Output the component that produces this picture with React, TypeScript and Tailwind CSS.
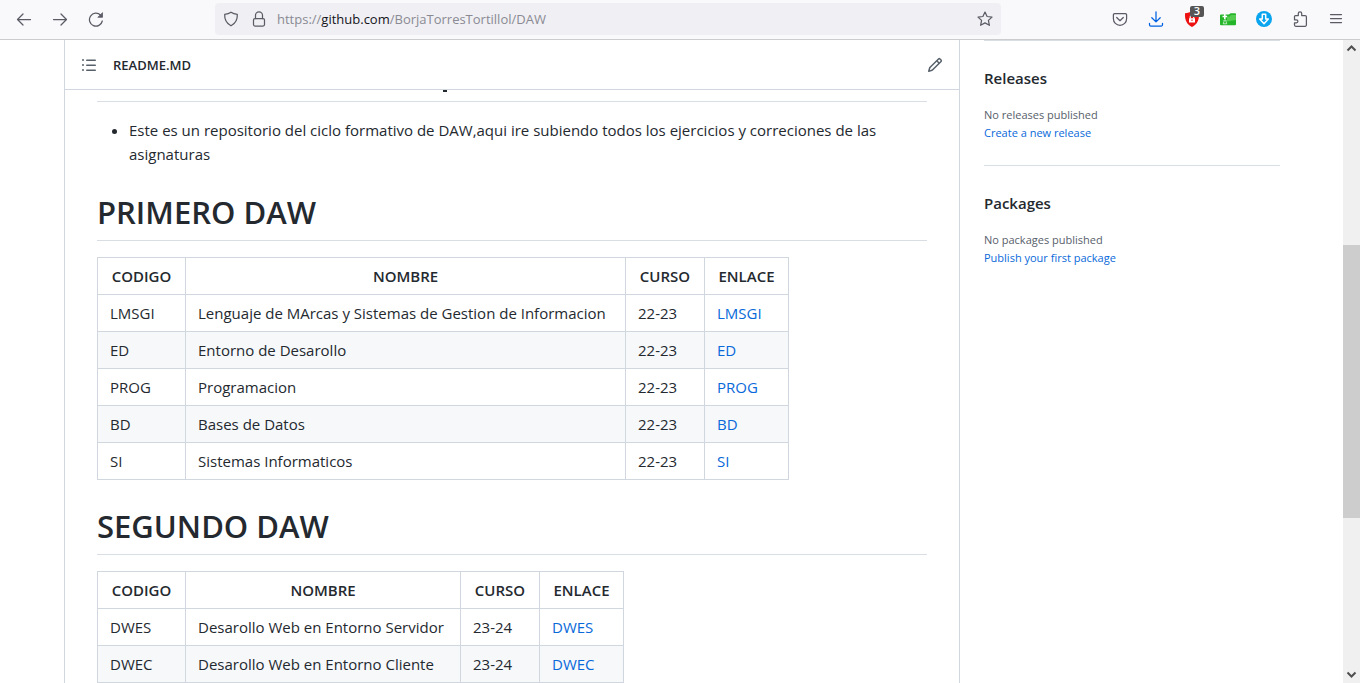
import type { ReactNode } from "react";

type Course = { code: string; name: string; year: string };

const firstYear: Course[] = [
  { code: "LMSGI", name: "Lenguaje de MArcas y Sistemas de Gestion de Informacion", year: "22-23" },
  { code: "ED", name: "Entorno de Desarollo", year: "22-23" },
  { code: "PROG", name: "Programacion", year: "22-23" },
  { code: "BD", name: "Bases de Datos", year: "22-23" },
  { code: "SI", name: "Sistemas Informaticos", year: "22-23" },
];

const secondYear: Course[] = [
  { code: "DWES", name: "Desarollo Web en Entorno Servidor", year: "23-24" },
  { code: "DWEC", name: "Desarollo Web en Entorno Cliente", year: "23-24" },
];

function ToolButton({ label, children }: { label: string; children: ReactNode }) {
  return (
    <button type="button" aria-label={label} className="relative flex h-8 w-9 shrink-0 items-center justify-center text-[#5b5b66]">
      {children}
    </button>
  );
}

function LineIcon({ children, className = "" }: { children: ReactNode; className?: string }) {
  return (
    <svg viewBox="0 0 16 16" className={`size-4 ${className}`} fill="none" stroke="currentColor" strokeWidth="1.25" strokeLinecap="round" strokeLinejoin="round" aria-hidden="true">
      {children}
    </svg>
  );
}

function Toolbar() {
  return (
    <header className="flex h-10 shrink-0 items-start border-b border-[#cccccc] bg-[#f9f9fb] px-1.5 pt-[3px]">
      <ToolButton label="Back">
        <LineIcon><path d="M14.5 8.5H1.5M7 3 1.5 8.5 7 14" /></LineIcon>
      </ToolButton>
      <ToolButton label="Forward">
        <LineIcon><path d="M1.5 8.5h13M9 3l5.500 5.500L9 14" /></LineIcon>
      </ToolButton>
      <ToolButton label="Reload">
        <LineIcon>
          <path d="M14.300 10A6.500 6.500 0 1 1 12.500 4" />
          <path d="M14.500 2v4.300h-4.300z" fill="currentColor" strokeWidth="0.800" />
        </LineIcon>
      </ToolButton>

      <div className="mx-[101px] flex h-8 min-w-0 flex-1 items-center rounded bg-[#f0f0f4] pl-2 pr-2 text-[#5b5b66]">
        <LineIcon className="shrink-0">
          <path d="M8 1.200c1.800 1.300 4 1.900 6.300 2.100.3 4.800-1.600 9-6.300 11.500C3.300 12.300 1.400 8.100 1.700 3.300 4 3.100 6.200 2.500 8 1.200z" />
        </LineIcon>
        <LineIcon className="ml-3 shrink-0">
          <rect x="2.500" y="7.500" width="11" height="7.500" rx="1.500" />
          <path d="M4.500 7.500V4.300a3.500 3.500 0 0 1 7 0v3.200" />
        </LineIcon>
        <div className="ml-2.5 flex-1 truncate pt-0.5 text-[13px] text-[#8a8a93]">
          https://<span className="text-[#15141a]">github.com</span>/BorjaTorresTortillol/DAW
        </div>
        <button type="button" aria-label="Bookmark this page">
          <LineIcon>
            <path d="M8 1.100l2.100 4.400 4.900.6-3.600 3.300 1 4.900L8 11.900l-4.400 2.400 1-4.900L1 6.100l4.900-.6z" />
          </LineIcon>
        </button>
      </div>

      <ToolButton label="Save to Pocket">
        <LineIcon>
          <path d="M2.700 2.600h10.600a1.300 1.300 0 0 1 1.300 1.300v3.800a6.600 6.600 0 0 1-13.200 0V3.900a1.300 1.300 0 0 1 1.300-1.300z" />
          <path d="M4.700 6.500 8 9.700l3.300-3.200" />
        </LineIcon>
      </ToolButton>
      <ToolButton label="Downloads">
        <LineIcon className="text-[#0061e0]">
          <path d="M8 .8v10M3.800 6.700 8 10.900l4.200-4.200M1.500 12.300v1.400a1.300 1.300 0 0 0 1.300 1.300h10.400a1.300 1.300 0 0 0 1.300-1.300v-1.400" />
        </LineIcon>
      </ToolButton>
      <ToolButton label="Content blocker, 3 blocked">
        <svg viewBox="0 0 16 16" className="size-4" aria-hidden="true">
          <path d="M8 0c2 1.400 4.300 2 7 2.200C15.400 9 13 13.600 8 16 3 13.600.6 9 1 2.200 3.700 2 6 1.400 8 0z" fill="#ed1111" />
          <path d="M5 7.200h6v4.300H5z" fill="#fff" />
          <path d="M6.300 7.200V5.500a1.700 1.700 0 0 1 3.400 0v1.700" fill="none" stroke="#fff" strokeWidth="1.200" />
          <path d="M7.500 8.500h1v1.500h-1z" fill="#ed1111" />
        </svg>
        <span className="absolute left-4 top-[3px] flex h-[11px] w-3.5 items-center justify-center rounded-[2px] bg-[#555555] text-[11px] font-semibold text-white">3</span>
      </ToolButton>
      <ToolButton label="Folder extension">
        <svg viewBox="0 0 16 16" className="size-4" aria-hidden="true">
          <path d="M0 4.500a1 1 0 0 1 1-1h8l1.500-1.300H15a1 1 0 0 1 1 1v10a1 1 0 0 1-1 1H1a1 1 0 0 1-1-1z" fill="#25b52a" />
          <path d="M7 5.500h2.500L11 4h5v5L7 10.500z" fill="#55cc50" />
          <path d="M4.800 3v5M2.500 5.500h4.600" stroke="#fff" strokeWidth="1.600" />
          <path d="M4 9h2v1.500l.8 2.300H3.200L4 10.500z" fill="#25b52a" stroke="#dff5df" strokeWidth="0.800" />
        </svg>
      </ToolButton>
      <ToolButton label="Download helper">
        <svg viewBox="0 0 16 16" className="size-4" aria-hidden="true">
          <circle cx="8" cy="8" r="8" fill="#0aa5ee" />
          <path d="M6.300 3.300h3.400v4.700h2.600L8 12.700 3.700 8h2.600z" fill="#0aa5ee" stroke="#fff" strokeWidth="1.500" strokeLinejoin="round" />
        </svg>
      </ToolButton>
      <ToolButton label="Extensions">
        <LineIcon>
          <path d="M2.500 6.200V5.500a1 1 0 0 1 1-1H6.300V2.500a1.700 1.700 0 0 1 3.400 0v2h3.500a1.200 1.200 0 0 1 1.200 1.200v8.400a1.200 1.200 0 0 1-1.200 1.200H3.700a1.200 1.200 0 0 1-1.200-1.200v-2.300h1.900a1.500 1.500 0 0 0 0-3H2.500z" />
        </LineIcon>
      </ToolButton>
      <ToolButton label="Open application menu">
        <LineIcon><path d="M2.500 3.500h11M2.500 7.500h11M2.500 11.500h11" /></LineIcon>
      </ToolButton>
    </header>
  );
}

function CourseTable({ courses, nameWidth }: { courses: Course[]; nameWidth: string }) {
  const cell = "h-[37px] border border-[#d0d7de] px-3 whitespace-nowrap";
  return (
    <table className="border-collapse text-[15px] leading-6">
      <thead>
        <tr>
          <th className={`${cell} w-[88px] font-semibold`}>CODIGO</th>
          <th className={`${cell} ${nameWidth} font-semibold`}>NOMBRE</th>
          <th className={`${cell} w-[79px] font-semibold`}>CURSO</th>
          <th className={`${cell} w-[84px] font-semibold`}>ENLACE</th>
        </tr>
      </thead>
      <tbody>
        {courses.map((course) => (
          <tr key={course.code} className="even:bg-[#f6f8fa]">
            <td className={cell}>{course.code}</td>
            <td className={cell}>{course.name}</td>
            <td className={cell}>{course.year}</td>
            <td className={cell}>
              <a href={`#${course.code}`} className="text-[#0969da]">{course.code}</a>
            </td>
          </tr>
        ))}
      </tbody>
    </table>
  );
}

function SectionTitle({ children }: { children: ReactNode }) {
  return (
    <h1 className="mb-4 mt-[26px] border-b border-[#d8dee4] pb-2 text-[31px] font-semibold leading-10">{children}</h1>
  );
}

function Readme() {
  return (
    <main className="min-w-0 flex-1 border-x border-[#d0d7de]">
      <div className="relative flex h-[50px] items-center border-b border-[#d0d7de] px-4 text-[#57606a]">
        <button type="button" aria-label="Table of contents">
          <svg viewBox="0 0 16 16" className="size-4" fill="currentColor" aria-hidden="true">
            <path d="M5.750 2.500h8.500a.75.75 0 0 1 0 1.500h-8.500a.75.75 0 0 1 0-1.500Zm0 5h8.500a.75.75 0 0 1 0 1.500h-8.500a.75.75 0 0 1 0-1.500Zm0 5h8.500a.75.75 0 0 1 0 1.500h-8.500a.75.75 0 0 1 0-1.500ZM2 14a1 1 0 1 1 0-2 1 1 0 0 1 0 2Zm1-6a1 1 0 1 1-2 0 1 1 0 0 1 2 0ZM2 4a1 1 0 1 1 0-2 1 1 0 0 1 0 2Z" />
          </svg>
        </button>
        <h2 className="ml-4 flex-1 pt-0.5 text-[13px] font-semibold text-[#24292f]">README.MD</h2>
        <button type="button" aria-label="Edit README">
          <svg viewBox="0 0 16 16" className="size-4" fill="currentColor" aria-hidden="true">
            <path d="M11.013 1.427a1.750 1.750 0 0 1 2.474 0l1.086 1.086a1.750 1.750 0 0 1 0 2.474l-8.610 8.610c-.21.21-.47.364-.756.445l-3.251.93a.75.75 0 0 1-.927-.928l.929-3.250c.081-.286.235-.547.445-.758l8.610-8.610Zm.176 4.823L9.750 4.810l-6.286 6.287a.253.253 0 0 0-.064.108l-.558 1.953 1.953-.558a.253.253 0 0 0 .108-.064Zm1.238-3.763a.25.25 0 0 0-.354 0L10.811 3.750l1.439 1.440 1.263-1.263a.25.25 0 0 0 0-.354Z" />
          </svg>
        </button>
        <span className="absolute left-[378px] top-full mt-px h-0.5 w-1 bg-[#24292f]" aria-hidden="true" />
      </div>
      <article className="px-8 text-[#24292f]">
        <div className="h-3 border-b border-[#d8dee4]" />
        <ul className="mt-4 list-disc pl-8 text-[15px] leading-6">
          <li>
            Este es un repositorio del ciclo formativo de DAW,aqui ire subiendo todos los ejercicios y correciones de las asignaturas
          </li>
        </ul>
        <SectionTitle>PRIMERO DAW</SectionTitle>
        <CourseTable courses={firstYear} nameWidth="w-[440px]" />
        <SectionTitle>SEGUNDO DAW</SectionTitle>
        <CourseTable courses={secondYear} nameWidth="w-[275px]" />
      </article>
    </main>
  );
}

function SidebarSection({ title, note, action }: { title: string; note: string; action: string }) {
  return (
    <section className="border-t border-[#d8dee4] pb-[23px] pt-[25px]">
      <h2 className="mb-4 text-[15px] font-semibold leading-6 text-[#24292f]">{title}</h2>
      <p className="text-[11px] leading-[18px] text-[#57606a]">{note}</p>
      <p className="text-[11px] leading-[18px]">
        <a href="#new" className="text-[#0969da]">{action}</a>
      </p>
    </section>
  );
}

function ScrollBar() {
  return (
    <div className="flex w-[17px] shrink-0 flex-col items-center bg-[#f0f0f0] text-[#505050]" aria-hidden="true">
      <svg viewBox="0 0 17 17" className="size-[17px]" fill="none" stroke="currentColor" strokeWidth="2">
        <path d="M4.500 10.500l4-4 4 4" />
      </svg>
      <div className="grow-[188]" />
      <div className="w-full grow-[273] bg-[#cdcdcd]" />
      <div className="grow-[148]" />
      <svg viewBox="0 0 17 17" className="size-[17px]" fill="none" stroke="currentColor" strokeWidth="2">
        <path d="M4.500 6.500l4 4 4-4" />
      </svg>
    </div>
  );
}

export default function App() {
  return (
    <div className="flex h-screen flex-col overflow-hidden bg-white font-['Open_Sans','Noto_Sans',sans-serif]">
      <Toolbar />
      <div className="flex min-h-0 flex-1">
        <div className="flex min-w-0 flex-1 overflow-hidden pl-16 pr-[63px]">
          <Readme />
          <aside className="ml-6 w-[296px] shrink-0">
            <SidebarSection title="Releases" note="No releases published" action="Create a new release" />
            <SidebarSection title="Packages" note="No packages published" action="Publish your first package" />
          </aside>
        </div>
        <ScrollBar />
      </div>
    </div>
  );
}
